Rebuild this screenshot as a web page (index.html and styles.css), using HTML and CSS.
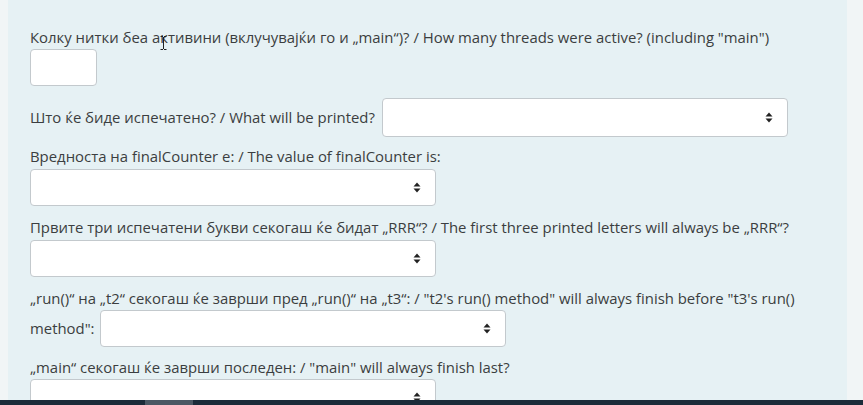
FILE: index.html
```html
<!DOCTYPE html>
<html lang="mk">
<head>
<meta charset="utf-8">
<title>Quiz</title>
<link rel="stylesheet" href="styles.css">
</head>
<body>
<div class="page">
  <div class="panel">
    <div class="q q1">
      <div class="label">Колку нитки беа активини (вклучувајќи го и „main“)? / How many threads were active? (including "main")</div>
      <div class="textbox"></div>
      <svg class="cursor" width="7" height="14" viewBox="0 0 7 14"><path d="M0.5 0.5h2.5M4 0.5h2.5M3.5 1v12M0.5 13.5h2.5M4 13.5h2.5" stroke="#222" stroke-width="1" fill="none"/></svg>
    </div>
    <div class="q q2 row">
      <span class="label">Што ќе биде испечатено? / What will be printed?</span>
      <div class="select"><svg class="caret" width="8" height="11" viewBox="0 0 8 11"><path d="M4 0.5L7.5 4.5H0.5Z M4 10.5L7.5 6.5H0.5Z" fill="#222"/></svg></div>
    </div>
    <div class="q q3">
      <div class="label">Вредноста на finalCounter е: / The value of finalCounter is:</div>
      <div class="select"><svg class="caret" width="8" height="11" viewBox="0 0 8 11"><path d="M4 0.5L7.5 4.5H0.5Z M4 10.5L7.5 6.5H0.5Z" fill="#222"/></svg></div>
    </div>
    <div class="q q4">
      <div class="label">Првите три испечатени букви секогаш ќе бидат „RRR“? / The first three printed letters will always be „RRR“?</div>
      <div class="select"><svg class="caret" width="8" height="11" viewBox="0 0 8 11"><path d="M4 0.5L7.5 4.5H0.5Z M4 10.5L7.5 6.5H0.5Z" fill="#222"/></svg></div>
    </div>
    <div class="q q5">
      <div class="label">„run()“ на „t2“ секогаш ќе заврши пред „run()“ на „t3“: / "t2's run() method" will always finish before "t3's run()</div>
      <div class="row">
        <span class="label">method":</span>
        <div class="select"><svg class="caret" width="8" height="11" viewBox="0 0 8 11"><path d="M4 0.5L7.5 4.5H0.5Z M4 10.5L7.5 6.5H0.5Z" fill="#222"/></svg></div>
      </div>
    </div>
    <div class="q q6">
      <div class="label">„main“ секогаш ќе заврши последен: / "main" will always finish last?</div>
      <div class="select"><svg class="caret" width="8" height="11" viewBox="0 0 8 11"><path d="M4 0.5L7.5 4.5H0.5Z M4 10.5L7.5 6.5H0.5Z" fill="#222"/></svg></div>
    </div>
  </div>
</div>
<div class="taskbar"><div class="tb-seg"></div></div>
</body>
</html>
```
FILE: styles.css
```css
html, body {
  margin: 0;
  padding: 0;
  height: 100%;
  overflow: hidden;
}
body {
  background: #f1f5f6;
  font-family: "Open Sans", "Noto Sans", sans-serif;
  font-size: 14.9px;
  color: #3b3e40;
  display: flex;
  flex-direction: column;
}
.page {
  flex: 1;
  display: flex;
  padding-left: 8px;
  padding-right: 16px;
  overflow: hidden;
}
.panel {
  flex: 1;
  background: #e6f1f4;
  padding: 26px 0 0 22px;
}
.q {
  position: relative;
}
.label {
  line-height: 22px;
  white-space: nowrap;
}
.row {
  display: flex;
  align-items: center;
  gap: 5px;
}
.q2.row {
  gap: 7px;
}
.textbox {
  width: 65px;
  height: 35px;
  margin-top: 1px;
  background: #fff;
  border: 1px solid #c3c9cd;
  border-radius: 4px;
}
.select {
  position: relative;
  width: 390px;
  height: 35px;
  background: #fff;
  border: 1px solid #c3c9cd;
  border-radius: 4px;
  display: flex;
  align-items: center;
  justify-content: flex-end;
  padding-right: 14px;
  box-sizing: content-box;
}
.select .caret {
  display: block;
}
.q1 { padding-bottom: 11px; }
.q2 { padding-bottom: 8px; }
.q2 .select { height: 37px; margin-top: 1px; }
.q3 .select, .q4 .select { margin-top: 2px; }
.q3, .q4 { padding-bottom: 10px; }
.q5 .row .select { margin-top: 1px; height: 35px; }
.q5 { padding-bottom: 9px; }
.q6 .select { margin-top: 1px; }
.cursor {
  position: absolute;
  left: 130px;
  top: 10px;
}
.taskbar {
  height: 5px;
  background: #1b2b39;
  flex: none;
  position: relative;
}
.tb-seg {
  position: absolute;
  left: 145px;
  width: 48px;
  top: 0;
  bottom: 0;
  background: #4b5864;
}
```
